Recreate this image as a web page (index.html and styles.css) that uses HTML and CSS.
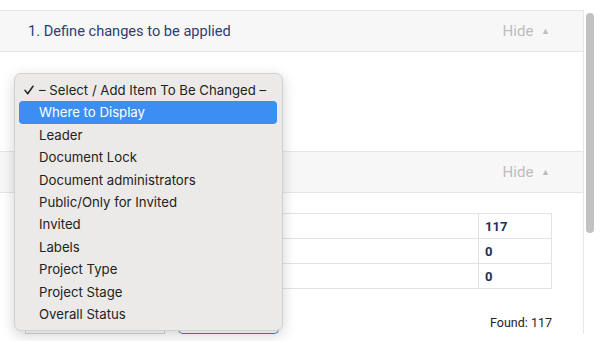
FILE: index.html
```html
<!DOCTYPE html>
<html lang="en">
<head>
  <meta charset="UTF-8">
  <title>Bulk change</title>
  <link rel="stylesheet" href="styles.css">
</head>
<body>
  <div class="page">
    <div class="main">
      <div class="panel">
        <div class="panel-head">
          <span class="panel-title">1. Define changes to be applied</span>
          <span class="hide-link">Hide <span class="caret">&#9650;</span></span>
        </div>
        <div class="panel-body first-body"></div>
        <div class="panel-head">
          <span class="panel-title"></span>
          <span class="hide-link">Hide <span class="caret">&#9650;</span></span>
        </div>
        <div class="panel-body second-body">
          <table class="counts">
            <tr><td class="label-cell"></td><td class="num">117</td></tr>
            <tr><td class="label-cell"></td><td class="num">0</td></tr>
            <tr><td class="label-cell"></td><td class="num">0</td></tr>
          </table>
          <div class="footer-row">
            <div class="controls">
              <div class="fake-select"></div>
              <div class="fake-button"></div>
            </div>
            <div class="found">Found: 117</div>
          </div>
        </div>
      </div>
    </div>
    <div class="scroll-track">
      <div class="scroll-thumb"></div>
    </div>

    <ul class="menu">
      <li class="menu-item checked">
        <svg class="check" width="10" height="10" viewBox="0 0 10 10"><path d="M1 5.4 L3.7 8.8 L9 1.2" fill="none" stroke="#222" stroke-width="1.5" stroke-linecap="round" stroke-linejoin="round"/></svg>&ndash; Select / Add Item To Be Changed &ndash;
      </li>
      <li class="menu-item active">Where to Display</li>
      <li class="menu-item">Leader</li>
      <li class="menu-item">Document Lock</li>
      <li class="menu-item">Document administrators</li>
      <li class="menu-item">Public/Only for Invited</li>
      <li class="menu-item">Invited</li>
      <li class="menu-item">Labels</li>
      <li class="menu-item">Project Type</li>
      <li class="menu-item">Project Stage</li>
      <li class="menu-item">Overall Status</li>
    </ul>
  </div>
</body>
</html>
```

FILE: styles.css
```css
body {
  margin: 0;
  background: #fff;
  font-family: Roboto, "Liberation Sans", sans-serif;
  overflow: hidden;
}

.page {
  position: relative;
  display: flex;
  height: 341px;
}

.main {
  width: 584px;
  padding-top: 10px;
}

.panel {
  margin-left: -1px;
  border: 1px solid #e6e6e6;
  border-bottom: none;
}

.panel-head {
  display: flex;
  justify-content: space-between;
  align-items: center;
  height: 40px;
  padding: 0 33px 0 28px;
  background: #f7f7f7;
  border-bottom: 1px solid #e6e6e6;
}

.panel-title {
  color: #2b3f73;
  font-size: 14.6px;
}

.hide-link {
  color: #bdbdbd;
  font-size: 15px;
}

.caret {
  font-size: 9px;
  margin-left: 4px;
  vertical-align: 2px;
}

.panel-body {
  background: #fff;
}

.first-body {
  height: 99px;
  border-bottom: 1px solid #e6e6e6;
}

.second-body {
  padding: 20px 31px 0 25px;
}

.counts {
  width: 100%;
  border-collapse: collapse;
}

.counts td {
  height: 24px;
  border: 1px solid #e3e3e3;
  padding: 0 6px;
  font-size: 13px;
}

.counts .num {
  width: 60px;
  font-weight: bold;
  color: #1d2d5c;
}

.footer-row {
  display: flex;
  justify-content: space-between;
  margin-top: 26px;
}

.controls {
  display: flex;
  gap: 13px;
  padding-top: 6px;
}

.fake-select {
  width: 138px;
  height: 12px;
  border: 1px solid #d6d6d6;
  border-top: none;
}

.fake-button {
  width: 99px;
  height: 12px;
  border: 1px solid #4a79c9;
  border-top: none;
  border-radius: 0 0 5px 5px;
}

.found {
  font-size: 12.5px;
  color: #222;
}

.scroll-track {
  flex: 1;
  padding: 13px 0 0 2px;
}

.scroll-thumb {
  width: 8px;
  height: 220px;
  border-radius: 4px;
  background: #c2c2c2;
}

.menu {
  position: absolute;
  left: 14px;
  top: 73px;
  width: 258px;
  margin: 0;
  padding: 5px 5px 5px 4px;
  list-style: none;
  background: #ebeae8;
  border: 1px solid #d2d1cf;
  border-radius: 7px;
  box-shadow: 0 4px 14px rgba(0, 0, 0, 0.18);
  font-family: Inter, "Liberation Sans", sans-serif;
  font-size: 13.2px;
  color: #222;
}

.menu-item {
  height: 22.4px;
  line-height: 22.4px;
  padding-left: 20px;
  border-radius: 4px;
  white-space: nowrap;
}

.menu-item.checked {
  position: relative;
}

.check {
  position: absolute;
  left: 5px;
  top: 6px;
}

.menu-item.active {
  background: #3d8ef3;
  color: #fff;
}
```
